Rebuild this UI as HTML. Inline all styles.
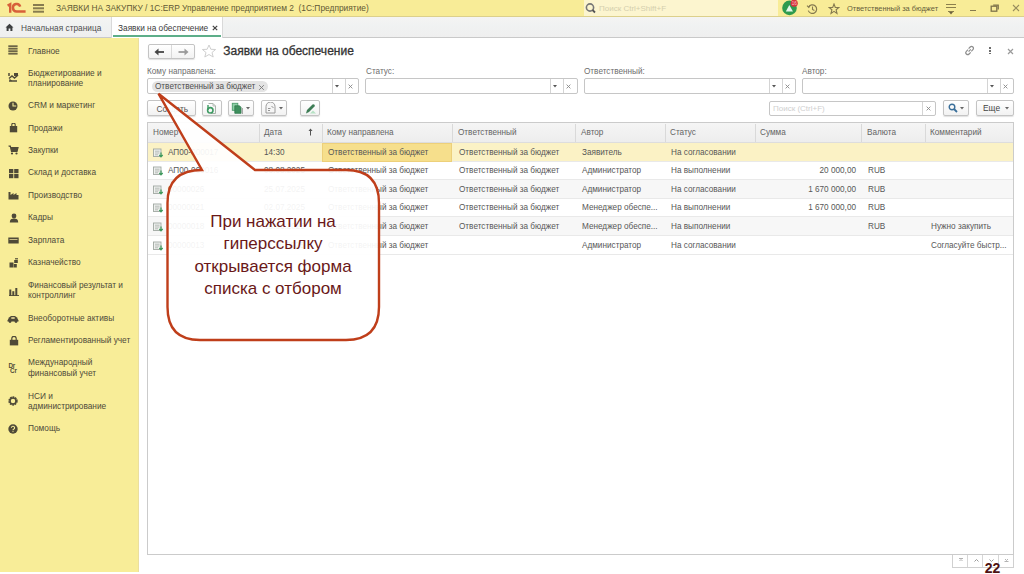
<!DOCTYPE html>
<html><head><meta charset="utf-8">
<style>
*{box-sizing:border-box;margin:0;padding:0}
html,body{width:1024px;height:574px;overflow:hidden;background:#fff;font-family:"Liberation Sans",sans-serif;position:relative}
.a{position:absolute;white-space:nowrap}
.side-t{font-size:8.3px;color:#4e4a3a;line-height:10.2px}
.lbl{font-size:8.2px;color:#6e6e6e;margin-top:0}
.inp{border:1px solid #C6C6C6;border-radius:2px;background:#fff;height:15.5px}
.dv{position:absolute;top:0;bottom:0;width:1px;background:#D4D4D4}
.btn{border:1px solid #C4C4C4;border-radius:2px;background:linear-gradient(#fff,#F2F2F2);box-shadow:0 1px 1px rgba(0,0,0,.12)}
.th{font-size:8.2px;color:#646464}
.td{font-size:8.2px;color:#575757}
.ico{position:absolute}
</style></head><body>

<div class="a" style="left:0;top:0;width:1024px;height:17px;background:#F8EC97;border-bottom:1px solid #DCD08C"></div>
<div class="a" style="left:0;top:17px;width:1024px;height:21px;background:linear-gradient(#F4F4F3,#F0F2F2 40%,#EFEFEF);border-bottom:1px solid #C9C9C9"></div>
<div class="a" style="left:0;top:38px;width:139px;height:534px;background:#F8ED98;border-right:1px solid #EBDF9E"></div>
<svg class="ico" style="left:6px;top:2px" width="21" height="12" viewBox="0 0 21 12">
<path d="M1.6 3.6 L4.2 2.2 L4.2 10.8" stroke="#D7603A" stroke-width="2.4" fill="none"/>
<path d="M14.2 4.6 A3.7 3.7 0 1 0 10.6 9.4 L19.6 9.4" stroke="#D7603A" stroke-width="2.5" fill="none"/>
</svg>
<div class="a" style="left:33px;top:4px;width:10.5px;height:1.6px;background:#877c50;box-shadow:0 3.3px 0 #877c50,0 6.7px 0 #877c50"></div>
<div class="a" style="left:56px;top:2.7px;font-size:8.4px;color:#625935">ЗАЯВКИ НА ЗАКУПКУ / 1С:ERP Управление предприятием 2&nbsp; (1С:Предприятие)</div>
<div class="a" style="left:584px;top:0;width:194px;height:16px;background:#FCF5CF"></div>
<svg class="ico" style="left:585px;top:2px" width="12" height="12" viewBox="0 0 12 12"><circle cx="5" cy="5.5" r="3.6" stroke="#777" stroke-width="1.6" fill="none"/><path d="M7.5 8l2.5 2.5" stroke="#555" stroke-width="1.8"/></svg>
<div class="a" style="left:599px;top:3.5px;font-size:8px;color:#d4cfae">Поиск Ctrl+Shift+F</div>
<svg class="ico" style="left:780px;top:0" width="20" height="17" viewBox="0 0 20 17"><circle cx="9.5" cy="7.9" r="7.3" fill="#2E9B4E"/><path d="M5.8 11.5 L9.3 5 L13 11.5 Z" fill="#E4F7E8"/><circle cx="14.2" cy="3.2" r="3.6" fill="#D9363E"/><text x="14.2" y="5" font-size="4.6" fill="#f6c0c0" text-anchor="middle" font-family="Liberation Sans">16</text></svg>
<svg class="ico" style="left:805.5px;top:2.5px" width="13" height="12" viewBox="0 0 13 12"><path d="M2.6 4 A4.3 4.3 0 1 1 2.3 7.6" stroke="#857a50" stroke-width="1.2" fill="none"/><path d="M1 2.6 L2.8 4.4 L4.4 2.2" stroke="#857a50" stroke-width="1.1" fill="none"/><path d="M6.5 3.6 V6.4 L8.4 7.5" stroke="#857a50" stroke-width="1.1" fill="none"/></svg>
<svg class="ico" style="left:827.5px;top:2.5px" width="12" height="12" viewBox="0 0 12 12"><path d="M6 1 L7.3 4.4 L10.8 4.5 L8.1 6.7 L9 10.4 L6 8.3 L3 10.4 L3.9 6.7 L1.2 4.5 L4.7 4.4 Z" stroke="#857a50" stroke-width="1.1" fill="none"/></svg>
<div class="a" style="left:847px;top:4px;font-size:7.45px;color:#675e3c">Ответственный за бюджет</div>
<div class="a" style="left:946px;top:4px;width:10px;height:1.3px;background:#8b7f4c;box-shadow:0 3px 0 #8b7f4c"></div>
<div class="a" style="left:948px;top:10.5px;width:6px;height:1.3px;background:#8b7f4c"></div>
<svg class="ico" style="left:949px;top:12px" width="4" height="3"><path d="M0 0h4l-2 2.5z" fill="#6b6040"/></svg>
<div class="a" style="left:969.5px;top:10px;width:6.5px;height:1.4px;background:#857a4e"></div>
<svg class="ico" style="left:990px;top:3px" width="10" height="10" viewBox="0 0 10 10"><rect x="1.2" y="3.2" width="5.6" height="5" stroke="#7d7249" stroke-width="1.3" fill="none"/><path d="M3.2 2.2 H8.2 V6.5" stroke="#7d7249" stroke-width="1.3" fill="none"/></svg>
<svg class="ico" style="left:1011px;top:3px" width="10" height="10" viewBox="0 0 10 10"><path d="M2 2 L8 8 M8 2 L2 8" stroke="#978c5e" stroke-width="1.1"/></svg>
<svg class="ico" style="left:5px;top:23px" width="9" height="9" viewBox="0 0 9 9"><path d="M0.5 4.5 L4.5 0.8 L8.5 4.5 L7.4 4.5 L7.4 8 L5.4 8 L5.4 5.6 L3.6 5.6 L3.6 8 L1.6 8 L1.6 4.5 Z" fill="#3d3f40"/></svg>
<div class="a" style="left:21px;top:22.5px;font-size:8.3px;color:#4e4e4e">Начальная страница</div>
<div class="a" style="left:111px;top:17px;width:112px;height:21px;background:#fff;border-left:1px solid #D9D9D9;border-right:1px solid #D9D9D9"></div>
<div class="a" style="left:113px;top:35px;width:108px;height:1.8px;background:#5DAE89"></div>
<div class="a" style="left:118px;top:22.5px;font-size:8.3px;color:#3c3c3c">Заявки на обеспечение</div>
<svg class="ico" style="left:212px;top:25px" width="6" height="6"><path d="M0.8 0.8L5.2 5.2M5.2 0.8L0.8 5.2" stroke="#444" stroke-width="1.2"/></svg>
<div class="a side-t" style="left:28px;top:45.5px">Главное</div>
<div class="a side-t" style="left:28px;top:67.8px">Бюджетирование и<br>планирование</div>
<div class="a side-t" style="left:28px;top:100.0px">CRM и маркетинг</div>
<div class="a side-t" style="left:28px;top:122.8px">Продажи</div>
<div class="a side-t" style="left:28px;top:145.1px">Закупки</div>
<div class="a side-t" style="left:28px;top:167.1px">Склад и доставка</div>
<div class="a side-t" style="left:28px;top:190.0px">Производство</div>
<div class="a side-t" style="left:28px;top:212.3px">Кадры</div>
<div class="a side-t" style="left:28px;top:235.0px">Зарплата</div>
<div class="a side-t" style="left:28px;top:257.0px">Казначейство</div>
<div class="a side-t" style="left:28px;top:279.5px">Финансовый результат и<br>контроллинг</div>
<div class="a side-t" style="left:28px;top:313.0px">Внеоборотные активы</div>
<div class="a side-t" style="left:28px;top:335.3px">Регламентированный учет</div>
<div class="a side-t" style="left:28px;top:357.3px">Международный<br>финансовый учет</div>
<div class="a side-t" style="left:28px;top:391.0px">НСИ и<br>администрирование</div>
<div class="a side-t" style="left:28px;top:423.1px">Помощь</div>
<svg class="ico" style="left:8.3px;top:44.7px" width="10" height="10"><g fill="#6c6446"><rect x="0.3" y="0.3" width="9.3" height="1.8"/><rect x="0.3" y="2.8" width="9.3" height="1.8"/><rect x="0.3" y="5.3" width="9.3" height="1.8"/><rect x="0.3" y="7.8" width="9.3" height="1.8"/></g></svg>
<svg class="ico" style="left:8px;top:72px" width="11" height="11"><path d="M1 1v3M1 6.5l3-2.5 2.5 2 3.5-3" stroke="#4f4a38" stroke-width="1.5" fill="none"/><rect x="6" y="1" width="4" height="3" fill="#4f4a38"/><path d="M1 9h8" stroke="#4f4a38" stroke-width="1.5"/><path d="M1.5 7.5l2 1.5" stroke="#4f4a38" stroke-width="1.2"/></svg>
<svg class="ico" style="left:8px;top:100.5px" width="10" height="10"><circle cx="5" cy="5" r="4.5" fill="#4f4a38"/><path d="M5 1.8V5H8.2" stroke="#F8ED98" stroke-width="1.1" fill="none"/></svg>
<svg class="ico" style="left:9px;top:123px" width="9" height="10"><path d="M2.8 3V1.8a1.7 1.7 0 0 1 3.4 0V3" stroke="#4f4a38" stroke-width="1.1" fill="none"/><rect x="0.8" y="3" width="7.4" height="6.3" fill="#4f4a38"/></svg>
<svg class="ico" style="left:8px;top:145px" width="11" height="10"><path d="M0.5 1H2.3L3.5 6.5H9L10 2.5H2.8" stroke="#4f4a38" stroke-width="1.2" fill="#4f4a38"/><circle cx="4" cy="8.5" r="1.1" fill="#4f4a38"/><circle cx="8.5" cy="8.5" r="1.1" fill="#4f4a38"/></svg>
<svg class="ico" style="left:8.5px;top:168.5px" width="10" height="10"><rect x="0" y="0" width="4.3" height="4.2" fill="#4f4a38"/><rect x="5.2" y="0" width="4.3" height="4.2" fill="#4f4a38"/><rect x="0" y="5" width="4.3" height="4.2" fill="#4f4a38"/><rect x="5.2" y="5" width="4.3" height="4.2" fill="#4f4a38"/></svg>
<svg class="ico" style="left:8px;top:190px" width="11" height="10"><path d="M0.5 9.5V2H2.5V5L5.5 3V5L8.5 3V5H10.5V9.5Z" fill="#4f4a38"/></svg>
<svg class="ico" style="left:8.5px;top:212.5px" width="10" height="10"><circle cx="5" cy="3" r="2.4" fill="#4f4a38"/><path d="M0.8 9.5C0.8 6.5 2.5 5.6 5 5.6S9.2 6.5 9.2 9.5Z" fill="#4f4a38"/></svg>
<svg class="ico" style="left:8px;top:236.5px" width="11" height="7"><rect x="0.3" y="0.5" width="10.4" height="6" fill="#4f4a38"/><rect x="1.5" y="2" width="8" height="1" fill="#C9BC84"/></svg>
<svg class="ico" style="left:8.5px;top:257.5px" width="10" height="10"><rect x="0.5" y="4.5" width="4" height="5" fill="#4f4a38"/><rect x="5.2" y="2" width="3.6" height="3" fill="#4f4a38"/><path d="M6 0.8h3" stroke="#4f4a38" stroke-width="1.2"/><rect x="4.8" y="6" width="3" height="3.5" fill="#4f4a38"/></svg>
<svg class="ico" style="left:8.5px;top:287.5px" width="10" height="8"><rect x="0.3" y="1.5" width="2" height="6.5" fill="#4f4a38"/><rect x="3.3" y="3.2" width="2" height="4.8" fill="#4f4a38"/><rect x="6.3" y="0" width="2" height="8" fill="#4f4a38"/><path d="M0 7.6h10" stroke="#4f4a38"/></svg>
<svg class="ico" style="left:7px;top:314.5px" width="12" height="8"><path d="M0.5 5.5L2 2.5L4 1H8L10 2.5L11.5 5.5V6.5H0.5Z" fill="#4f4a38"/><circle cx="3" cy="6.5" r="1.4" fill="#4f4a38"/><circle cx="9" cy="6.5" r="1.4" fill="#4f4a38"/><rect x="4.3" y="2" width="3.4" height="2" fill="#C9BC84"/></svg>
<svg class="ico" style="left:8.5px;top:336px" width="10" height="10"><path d="M2.8 4V2.5a2.2 2.2 0 0 1 4.4 0V4" stroke="#4f4a38" stroke-width="1.2" fill="none"/><rect x="0.8" y="3.8" width="8.4" height="5.6" fill="#4f4a38"/></svg>
<div class="a" style="left:8.5px;top:362.5px;font-size:6.3px;line-height:5px;font-weight:bold;letter-spacing:-0.2px;color:#4f4a38">Dr<br>&nbsp;Cr</div>
<svg class="ico" style="left:8px;top:395.5px" width="10" height="10"><circle cx="5" cy="5" r="3.6" stroke="#4f4a38" stroke-width="2.2" fill="none" stroke-dasharray="1.6 0.7"/><circle cx="5" cy="5" r="3" stroke="#4f4a38" stroke-width="1.4" fill="none"/></svg>
<svg class="ico" style="left:8px;top:423.5px" width="10" height="10"><circle cx="5" cy="5" r="4.7" fill="#4f4a38"/><path d="M3.4 3.8a1.6 1.6 0 1 1 2.2 1.5c-.5.2-.6.5-.6 1" stroke="#F8ED98" stroke-width="1.1" fill="none"/><circle cx="5" cy="7.6" r="0.6" fill="#F8ED98"/></svg>
<div class="a btn" style="left:147.5px;top:43.5px;width:47px;height:15.5px"></div>
<div class="a" style="left:171px;top:44.5px;width:1px;height:13.5px;background:#D9D9D9"></div>
<svg class="ico" style="left:154px;top:47.5px" width="11" height="8"><path d="M10 4H3" stroke="#444" stroke-width="1.8"/><path d="M0.5 4L4.5 0.5V7.5Z" fill="#444"/></svg>
<svg class="ico" style="left:177.5px;top:47.5px" width="11" height="8"><path d="M0.5 4H7" stroke="#9a9a9a" stroke-width="1.8"/><path d="M10.5 4L6.5 0.5V7.5Z" fill="#9a9a9a"/></svg>
<svg class="ico" style="left:201px;top:44px" width="16" height="14" viewBox="0 0 16 14"><path d="M8 1 L9.9 5.3 L14.6 5.5 L11 8.5 L12.2 13 L8 10.5 L3.8 13 L5 8.5 L1.4 5.5 L6.1 5.3 Z" stroke="#cfcfcf" stroke-width="1" fill="none"/></svg>
<div class="a" style="left:223.3px;top:44.4px;font-size:12px;color:#333;-webkit-text-stroke:0.3px #333">Заявки на обеспечение</div>
<svg class="ico" style="left:964px;top:45px" width="12" height="11" viewBox="0 0 12 11"><path d="M4.6 3.6L6.2 2a1.9 1.9 0 0 1 2.7 2.7L7.3 6.3M6.7 7.4L5.1 9a1.9 1.9 0 0 1-2.7-2.7L4 4.7M4.6 6.6L6.8 4.4" stroke="#8d8d8d" stroke-width="1.2" fill="none"/></svg>
<div class="a" style="left:989px;top:47px;width:2px;height:7.5px;background:repeating-linear-gradient(#6d6d6d 0 1.8px,transparent 1.8px 2.8px)"></div>
<svg class="ico" style="left:1007px;top:48px" width="7" height="7"><path d="M1 1L6 6M6 1L1 6" stroke="#9a9a9a" stroke-width="1.2"/></svg>
<div class="a lbl" style="left:147px;top:67px">Кому направлена:</div>
<div class="a lbl" style="left:366px;top:67px">Статус:</div>
<div class="a lbl" style="left:584px;top:67px">Ответственный:</div>
<div class="a lbl" style="left:802px;top:67px">Автор:</div>
<div class="a inp" style="left:147px;top:78.3px;height:15.7px;width:212px"><div class="dv" style="left:183.8px"></div><div class="dv" style="left:197.2px"></div></div>
<svg class="ico" style="left:334.8px;top:84.5px" width="4" height="3"><path d="M0 0h4l-2 2.5z" fill="#555"/></svg>
<svg class="ico" style="left:348.2px;top:84px" width="5" height="5"><path d="M0.6 0.6L4.4 4.4M4.4 0.6L0.6 4.4" stroke="#888" stroke-width="0.9"/></svg>
<div class="a inp" style="left:365px;top:78.3px;height:15.7px;width:212.5px"><div class="dv" style="left:184.3px"></div><div class="dv" style="left:197.4px"></div></div>
<svg class="ico" style="left:553.3px;top:84.5px" width="4" height="3"><path d="M0 0h4l-2 2.5z" fill="#555"/></svg>
<svg class="ico" style="left:566.4px;top:84px" width="5" height="5"><path d="M0.6 0.6L4.4 4.4M4.4 0.6L0.6 4.4" stroke="#888" stroke-width="0.9"/></svg>
<div class="a inp" style="left:583.5px;top:78.3px;height:15.7px;width:212px"><div class="dv" style="left:184.2px"></div><div class="dv" style="left:197.5px"></div></div>
<svg class="ico" style="left:771.7px;top:84.5px" width="4" height="3"><path d="M0 0h4l-2 2.5z" fill="#555"/></svg>
<svg class="ico" style="left:785.0px;top:84px" width="5" height="5"><path d="M0.6 0.6L4.4 4.4M4.4 0.6L0.6 4.4" stroke="#888" stroke-width="0.9"/></svg>
<div class="a inp" style="left:802px;top:78.3px;height:15.7px;width:211.5px"><div class="dv" style="left:184px"></div><div class="dv" style="left:196.5px"></div></div>
<svg class="ico" style="left:990px;top:84.5px" width="4" height="3"><path d="M0 0h4l-2 2.5z" fill="#555"/></svg>
<svg class="ico" style="left:1002.5px;top:84px" width="5" height="5"><path d="M0.6 0.6L4.4 4.4M4.4 0.6L0.6 4.4" stroke="#888" stroke-width="0.9"/></svg>
<div class="a" style="left:151.5px;top:81px;width:116px;height:11px;background:#E4E4E4;border-radius:5.5px"></div>
<div class="a" style="left:155px;top:81.5px;font-size:8.2px;color:#505050">Ответственный за бюджет</div>
<svg class="ico" style="left:257.5px;top:83.5px" width="7" height="7"><path d="M1.2 1.2L5.8 5.8M5.8 1.2L1.2 5.8" stroke="#777" stroke-width="0.9"/></svg>
<div class="a btn" style="left:147px;top:100px;width:49px;height:16px"></div>
<div class="a" style="left:156.5px;top:103.5px;font-size:8.3px;color:#555">Создать</div>
<div class="a btn" style="left:202px;top:100px;width:19.5px;height:16px"></div>
<svg class="ico" style="left:205px;top:102px" width="14" height="13" viewBox="0 0 14 13"><path d="M3.5 1.5H8L10.5 4V11.5H6" fill="none" stroke="#a9b3ab" stroke-width="1"/><path d="M8 1.5V4H10.5" fill="none" stroke="#a9b3ab" stroke-width="0.8"/><circle cx="5.3" cy="8.3" r="2.7" fill="none" stroke="#3d9a62" stroke-width="1.6"/><path d="M3 3V8" stroke="#3d9a62" stroke-width="1.4"/></svg>
<div class="a btn" style="left:227.5px;top:100px;width:26.5px;height:16px"></div>
<svg class="ico" style="left:231px;top:102px" width="13" height="13" viewBox="0 0 13 13"><rect x="1.3" y="1.3" width="5.5" height="7" fill="#8fd0a8" stroke="#4e9c6c" stroke-width="0.9"/><path d="M3.8 3.8H8.5L10 5.3V11.3H3.8Z" fill="#3f8f5e" stroke="#2f7a4c" stroke-width="0.8"/><path d="M11.3 6V12" stroke="#8a8a8a" stroke-width="0.9"/></svg>
<svg class="ico" style="left:246px;top:107px" width="4" height="3"><path d="M0 0h4l-2 2.5z" fill="#666"/></svg>
<div class="a btn" style="left:260.5px;top:100px;width:26.5px;height:16px"></div>
<svg class="ico" style="left:263.5px;top:102px" width="13" height="13" viewBox="0 0 13 13"><path d="M2 11V4.5A4.5 4.5 0 0 1 11 4.5V11Z" fill="#f5f5f5" stroke="#9a9a9a" stroke-width="1"/><path d="M4 6.5h2.5M4 8.5h2M7.5 4l2 2" stroke="#8a8a8a" stroke-width="0.9"/></svg>
<svg class="ico" style="left:279px;top:107px" width="4" height="3"><path d="M0 0h4l-2 2.5z" fill="#666"/></svg>
<div class="a btn" style="left:300px;top:100px;width:19.5px;height:16px"></div>
<svg class="ico" style="left:303.5px;top:102px" width="13" height="13" viewBox="0 0 13 13"><path d="M9 8.5L12 11.5H6Z" fill="#b6e2c4"/><path d="M2 11.5L3 8L8.5 2.5Q9.5 1.8 10.5 2.7Q11.2 3.6 10.5 4.5L5 10Z" fill="#3e7d56"/></svg>
<div class="a inp" style="left:769px;top:100.5px;width:166.5px"><div class="dv" style="left:152.4px"></div></div>
<div class="a" style="left:773px;top:103.5px;font-size:8px;color:#cfcfcf">Поиск (Ctrl+F)</div>
<svg class="ico" style="left:926px;top:105.5px" width="5" height="5"><path d="M0.6 0.6L4.4 4.4M4.4 0.6L0.6 4.4" stroke="#888" stroke-width="0.9"/></svg>
<div class="a btn" style="left:942.5px;top:100px;width:26px;height:16px"></div>
<svg class="ico" style="left:947.5px;top:103px" width="10" height="10"><circle cx="4" cy="4" r="2.8" stroke="#3a6f9a" stroke-width="1.4" fill="none"/><path d="M6 6L9 9" stroke="#3a6f9a" stroke-width="1.8"/></svg>
<svg class="ico" style="left:960px;top:107px" width="4" height="3"><path d="M0 0h4l-2 2.5z" fill="#666"/></svg>
<div class="a btn" style="left:975.5px;top:100px;width:38px;height:16px"></div>
<div class="a" style="left:983px;top:103px;font-size:8.4px;color:#444">Еще</div>
<svg class="ico" style="left:1005px;top:107px" width="4" height="3"><path d="M0 0h4l-2 2.5z" fill="#666"/></svg>
<div class="a" style="left:147px;top:122px;width:867px;height:432.5px;border:1px solid #CBCBCB;background:#fff"></div>
<div class="a" style="left:148px;top:123px;width:865px;height:20px;background:linear-gradient(#F5F5F5,#EDEDED);border-bottom:1px solid #DDDDDD"></div>
<div class="a" style="left:259px;top:124px;width:1px;height:18px;background:#D9D9D9"></div>
<div class="a" style="left:322px;top:124px;width:1px;height:18px;background:#D9D9D9"></div>
<div class="a" style="left:452px;top:124px;width:1px;height:18px;background:#D9D9D9"></div>
<div class="a" style="left:575px;top:124px;width:1px;height:18px;background:#D9D9D9"></div>
<div class="a" style="left:665px;top:124px;width:1px;height:18px;background:#D9D9D9"></div>
<div class="a" style="left:755px;top:124px;width:1px;height:18px;background:#D9D9D9"></div>
<div class="a" style="left:861px;top:124px;width:1px;height:18px;background:#D9D9D9"></div>
<div class="a" style="left:925px;top:124px;width:1px;height:18px;background:#D9D9D9"></div>
<div class="a th" style="left:153px;top:128px">Номер</div>
<div class="a th" style="left:264px;top:128px">Дата</div>
<div class="a th" style="left:327px;top:128px">Кому направлена</div>
<div class="a th" style="left:458px;top:128px">Ответственный</div>
<div class="a th" style="left:581px;top:128px">Автор</div>
<div class="a th" style="left:670px;top:128px">Статус</div>
<div class="a th" style="left:760px;top:128px">Сумма</div>
<div class="a th" style="left:867px;top:128px">Валюта</div>
<div class="a th" style="left:930px;top:128px">Комментарий</div>
<svg class="ico" style="left:308px;top:127.5px" width="5" height="8"><path d="M2.5 7.5V1.5" stroke="#555" stroke-width="1"/><path d="M0.5 3L2.5 0.5L4.5 3Z" fill="#555"/></svg>
<div class="a" style="left:148px;top:143px;width:865px;height:18.6px;background:#FBF2C5;border-bottom:1px solid #E9E9E9"></div>
<div class="a" style="left:322px;top:143px;width:130px;height:18.6px;background:#F6DF8C;border:1px solid #EDD07A"></div>
<svg class="ico" style="left:153px;top:147.5px" width="11" height="10" viewBox="0 0 11 10"><rect x="0.5" y="1" width="7.5" height="7.5" fill="#eef0ee" stroke="#a0a8a2" stroke-width="0.9"/><path d="M2 3.2h4.5M2 5h4.5M2 6.8h3" stroke="#a8aea9" stroke-width="0.8"/><path d="M8 4.5v4.2M6.3 7l1.7 1.8 1.7-1.8" stroke="#3f9a5d" stroke-width="1.2" fill="none"/></svg>
<div class="a td" style="left:168px;top:147.6px">АП00-000017</div>
<div class="a td" style="left:264px;top:147.6px">14:30</div>
<div class="a td" style="left:328px;top:147.6px">Ответственный за бюджет</div>
<div class="a td" style="left:459px;top:147.6px">Ответственный за бюджет</div>
<div class="a td" style="left:582px;top:147.6px">Заявитель</div>
<div class="a td" style="left:671px;top:147.6px">На согласовании</div>
<div class="a" style="left:148px;top:161.6px;width:865px;height:18.6px;background:#fff;border-bottom:1px solid #E9E9E9"></div>
<svg class="ico" style="left:153px;top:166.1px" width="11" height="10" viewBox="0 0 11 10"><rect x="0.5" y="1" width="7.5" height="7.5" fill="#eef0ee" stroke="#a0a8a2" stroke-width="0.9"/><path d="M2 3.2h4.5M2 5h4.5M2 6.8h3" stroke="#a8aea9" stroke-width="0.8"/><path d="M8 4.5v4.2M6.3 7l1.7 1.8 1.7-1.8" stroke="#3f9a5d" stroke-width="1.2" fill="none"/></svg>
<div class="a td" style="left:168px;top:166.2px">АП00-000016</div>
<div class="a td" style="left:264px;top:166.2px">08.08.2025</div>
<div class="a td" style="left:328px;top:166.2px">Ответственный за бюджет</div>
<div class="a td" style="left:459px;top:166.2px">Ответственный за бюджет</div>
<div class="a td" style="left:582px;top:166.2px">Администратор</div>
<div class="a td" style="left:671px;top:166.2px">На выполнении</div>
<div class="a td" style="right:168px;top:166.2px">20 000,00</div>
<div class="a td" style="left:868px;top:166.2px">RUB</div>
<div class="a" style="left:148px;top:180.2px;width:865px;height:18.6px;background:#F7F7F7;border-bottom:1px solid #E9E9E9"></div>
<svg class="ico" style="left:153px;top:184.7px" width="11" height="10" viewBox="0 0 11 10"><rect x="0.5" y="1" width="7.5" height="7.5" fill="#eef0ee" stroke="#a0a8a2" stroke-width="0.9"/><path d="M2 3.2h4.5M2 5h4.5M2 6.8h3" stroke="#a8aea9" stroke-width="0.8"/><path d="M8 4.5v4.2M6.3 7l1.7 1.8 1.7-1.8" stroke="#3f9a5d" stroke-width="1.2" fill="none"/></svg>
<div class="a td" style="left:168px;top:184.79999999999998px">00000026</div>
<div class="a td" style="left:264px;top:184.79999999999998px">25.07.2025</div>
<div class="a td" style="left:328px;top:184.79999999999998px">Ответственный за бюджет</div>
<div class="a td" style="left:459px;top:184.79999999999998px">Ответственный за бюджет</div>
<div class="a td" style="left:582px;top:184.79999999999998px">Администратор</div>
<div class="a td" style="left:671px;top:184.79999999999998px">На согласовании</div>
<div class="a td" style="right:168px;top:184.79999999999998px">1 670 000,00</div>
<div class="a td" style="left:868px;top:184.79999999999998px">RUB</div>
<div class="a" style="left:148px;top:198.8px;width:865px;height:18.6px;background:#fff;border-bottom:1px solid #E9E9E9"></div>
<svg class="ico" style="left:153px;top:203.3px" width="11" height="10" viewBox="0 0 11 10"><rect x="0.5" y="1" width="7.5" height="7.5" fill="#eef0ee" stroke="#a0a8a2" stroke-width="0.9"/><path d="M2 3.2h4.5M2 5h4.5M2 6.8h3" stroke="#a8aea9" stroke-width="0.8"/><path d="M8 4.5v4.2M6.3 7l1.7 1.8 1.7-1.8" stroke="#3f9a5d" stroke-width="1.2" fill="none"/></svg>
<div class="a td" style="left:168px;top:203.4px">00000021</div>
<div class="a td" style="left:264px;top:203.4px">02.07.2025</div>
<div class="a td" style="left:328px;top:203.4px">Ответственный за бюджет</div>
<div class="a td" style="left:459px;top:203.4px">Ответственный за бюджет</div>
<div class="a td" style="left:582px;top:203.4px">Менеджер обеспе...</div>
<div class="a td" style="left:671px;top:203.4px">На выполнении</div>
<div class="a td" style="right:168px;top:203.4px">1 670 000,00</div>
<div class="a td" style="left:868px;top:203.4px">RUB</div>
<div class="a" style="left:148px;top:217.4px;width:865px;height:18.6px;background:#F7F7F7;border-bottom:1px solid #E9E9E9"></div>
<svg class="ico" style="left:153px;top:221.9px" width="11" height="10" viewBox="0 0 11 10"><rect x="0.5" y="1" width="7.5" height="7.5" fill="#eef0ee" stroke="#a0a8a2" stroke-width="0.9"/><path d="M2 3.2h4.5M2 5h4.5M2 6.8h3" stroke="#a8aea9" stroke-width="0.8"/><path d="M8 4.5v4.2M6.3 7l1.7 1.8 1.7-1.8" stroke="#3f9a5d" stroke-width="1.2" fill="none"/></svg>
<div class="a td" style="left:168px;top:222.0px">00000018</div>
<div class="a td" style="left:264px;top:222.0px">28.06.2025</div>
<div class="a td" style="left:328px;top:222.0px">Ответственный за бюджет</div>
<div class="a td" style="left:459px;top:222.0px">Ответственный за бюджет</div>
<div class="a td" style="left:582px;top:222.0px">Менеджер обеспе...</div>
<div class="a td" style="left:671px;top:222.0px">На выполнении</div>
<div class="a td" style="left:868px;top:222.0px">RUB</div>
<div class="a td" style="left:931px;top:222.0px">Нужно закупить</div>
<div class="a" style="left:148px;top:236px;width:865px;height:18.6px;background:#fff;border-bottom:1px solid #E9E9E9"></div>
<svg class="ico" style="left:153px;top:240.5px" width="11" height="10" viewBox="0 0 11 10"><rect x="0.5" y="1" width="7.5" height="7.5" fill="#eef0ee" stroke="#a0a8a2" stroke-width="0.9"/><path d="M2 3.2h4.5M2 5h4.5M2 6.8h3" stroke="#a8aea9" stroke-width="0.8"/><path d="M8 4.5v4.2M6.3 7l1.7 1.8 1.7-1.8" stroke="#3f9a5d" stroke-width="1.2" fill="none"/></svg>
<div class="a td" style="left:168px;top:240.6px">00000013</div>
<div class="a td" style="left:264px;top:240.6px">11.06.2025</div>
<div class="a td" style="left:328px;top:240.6px">Ответственный за бюджет</div>
<div class="a td" style="left:582px;top:240.6px">Администратор</div>
<div class="a td" style="left:671px;top:240.6px">На согласовании</div>
<div class="a td" style="left:931px;top:240.6px">Согласуйте быстр...</div>
<div class="a" style="left:951.5px;top:555px;width:62.5px;height:12.5px;border:1px solid #D0D0D0;border-top:none;background:#fff"></div>
<div class="a" style="left:967px;top:555px;width:1px;height:12px;background:#D6D6D6"></div>
<div class="a" style="left:982px;top:555px;width:1px;height:12px;background:#D6D6D6"></div>
<div class="a" style="left:997.5px;top:555px;width:1px;height:12px;background:#D6D6D6"></div>
<svg class="ico" style="left:955px;top:556px" width="58" height="9"><path d="M4 2.5h4M4.5 5l1.5-1.5L7.5 5" stroke="#aaa" stroke-width="0.9" fill="none"/><path d="M19.5 5.5l2-2 2 2" stroke="#999" stroke-width="1" fill="none"/><path d="M34.5 3.5l2 2 2-2" stroke="#999" stroke-width="1" fill="none"/><path d="M49.5 5.5h4M50 3l1.5 1.5L53 3" stroke="#aaa" stroke-width="0.9" fill="none"/></svg>
<svg class="ico" style="left:0;top:0" width="1024" height="574">
<path d="M202 170 L158.5 93.7 L255 170 L346 170 Q379 170 379 203 L379 307 Q379 340 346 340 L200 340 Q167.5 340 167.5 307 L167.5 203 Q167.5 170 202 170 Z" fill="rgba(255,255,255,0.93)" stroke="#BF3E1A" stroke-width="2.4" stroke-linejoin="miter"/>
</svg>
<div class="a" style="left:167px;top:210.6px;width:212px;text-align:center;font-size:17px;line-height:22.5px;color:#6a1818;white-space:normal">При нажатии на<br>гиперссылку<br>открывается форма<br>списка с отбором</div>
<div class="a" style="left:984.8px;top:559.5px;font-size:14px;font-weight:bold;color:#4e1212">22</div>
</body></html>
